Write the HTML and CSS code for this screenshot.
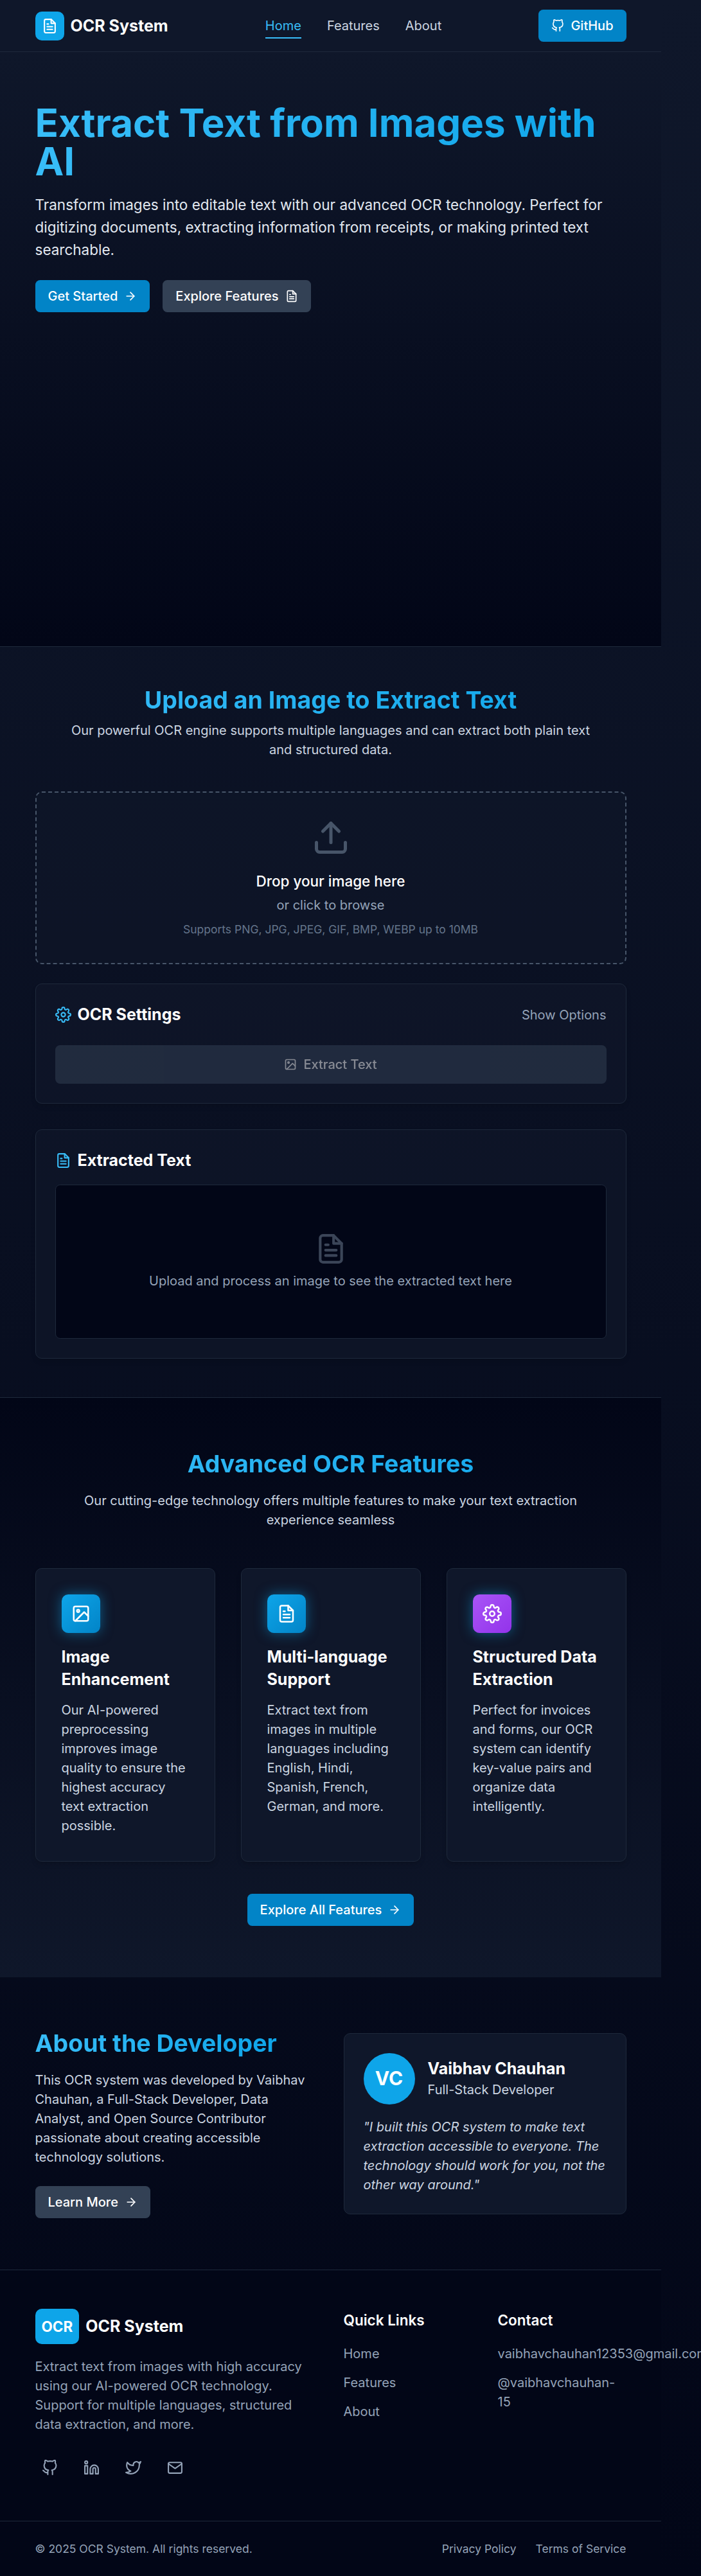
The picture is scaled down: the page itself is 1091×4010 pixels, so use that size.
FILE: index.html
```html
<!DOCTYPE html>
<html lang="en">
<head>
<meta charset="utf-8">
<title>OCR System</title>
<link rel="stylesheet" href="styles.css">
</head>
<body>
<svg class="sprite" aria-hidden="true">
  <symbol id="file" viewBox="0 0 24 24"><path d="M14 2H6a2 2 0 0 0-2 2v16a2 2 0 0 0 2 2h12a2 2 0 0 0 2-2V8z"/><polyline points="14 2 14 8 20 8"/><path d="M16 13H8M16 17H8M10 9H8"/></symbol>
  <symbol id="github" viewBox="0 0 24 24"><path d="M9 19c-5 1.5-5-2.5-7-3m14 6v-3.87a3.37 3.37 0 0 0-.94-2.61c3.14-.35 6.44-1.54 6.44-7A5.44 5.44 0 0 0 20 4.77 5.07 5.07 0 0 0 19.91 1S18.73.65 16 2.48a13.38 13.38 0 0 0-7 0C6.27.65 5.09 1 5.09 1A5.07 5.07 0 0 0 5 4.77a5.44 5.44 0 0 0-1.5 3.78c0 5.42 3.3 6.61 6.44 7A3.37 3.37 0 0 0 9 18.13V22"/></symbol>
  <symbol id="arrow" viewBox="0 0 24 24"><path d="M5 12h14"/><path d="m12 5 7 7-7 7"/></symbol>
  <symbol id="upload" viewBox="0 0 24 24"><path d="M21 15v4a2 2 0 0 1-2 2H5a2 2 0 0 1-2-2v-4"/><path d="m17 8-5-5-5 5"/><path d="M12 3v12"/></symbol>
  <symbol id="image" viewBox="0 0 24 24"><rect width="18" height="18" x="3" y="3" rx="2"/><circle cx="8.5" cy="8.5" r="1.5"/><polyline points="21 15 16 10 5 21"/></symbol>
  <symbol id="gear" viewBox="0 0 24 24"><circle cx="12" cy="12" r="3"/><path d="M19.4 15a1.65 1.65 0 0 0 .33 1.82l.06.06a2 2 0 0 1 0 2.83 2 2 0 0 1-2.83 0l-.06-.06a1.65 1.65 0 0 0-1.82-.33 1.65 1.65 0 0 0-1 1.51V21a2 2 0 0 1-2 2 2 2 0 0 1-2-2v-.09A1.65 1.65 0 0 0 9 19.4a1.65 1.65 0 0 0-1.82.33l-.06.06a2 2 0 0 1-2.83 0 2 2 0 0 1 0-2.83l.06-.06a1.65 1.65 0 0 0 .33-1.82 1.65 1.65 0 0 0-1.51-1H3a2 2 0 0 1-2-2 2 2 0 0 1 2-2h.09A1.65 1.65 0 0 0 4.6 9a1.65 1.65 0 0 0-.33-1.82l-.06-.06a2 2 0 0 1 0-2.83 2 2 0 0 1 2.83 0l.06.06a1.65 1.65 0 0 0 1.82.33H9a1.65 1.65 0 0 0 1-1.51V3a2 2 0 0 1 2-2 2 2 0 0 1 2 2v.09a1.65 1.65 0 0 0 1 1.51 1.65 1.65 0 0 0 1.82-.33l.06-.06a2 2 0 0 1 2.83 0 2 2 0 0 1 0 2.83l-.06.06a1.65 1.65 0 0 0-.33 1.82V9a1.65 1.65 0 0 0 1.51 1H21a2 2 0 0 1 2 2 2 2 0 0 1-2 2h-.09a1.65 1.65 0 0 0-1.51 1z"/></symbol>
  <symbol id="linkedin" viewBox="0 0 24 24"><path d="M16 8a6 6 0 0 1 6 6v7h-4v-7a2 2 0 0 0-4 0v7h-4v-7a6 6 0 0 1 6-6z"/><rect width="4" height="12" x="2" y="9"/><circle cx="4" cy="4" r="2"/></symbol>
  <symbol id="twitter" viewBox="0 0 24 24"><path d="M23 3a10.9 10.9 0 0 1-3.14 1.53 4.48 4.48 0 0 0-7.86 3v1A10.66 10.66 0 0 1 3 4s-4 9 5 13a11.64 11.64 0 0 1-7 2c9 5 20 0 20-11.5a4.5 4.5 0 0 0-.08-.83A7.72 7.72 0 0 0 23 3z"/></symbol>
  <symbol id="mail" viewBox="0 0 24 24"><rect width="20" height="16" x="2" y="4" rx="2"/><polyline points="22 6 12 13 2 6"/></symbol>
</svg>
<div class="page">
  <header class="site-header">
    <div class="container header-row">
      <a class="brand"><span class="brand-mark"><svg class="icon icon-md"><use href="#file"/></svg></span><span class="brand-name">OCR System</span></a>
      <nav class="nav"><a class="nav-link active">Home</a><a class="nav-link">Features</a><a class="nav-link">About</a></nav>
      <a class="btn btn-primary"><svg class="icon"><use href="#github"/></svg>GitHub</a>
    </div>
  </header>

  <section class="hero">
    <div class="container">
      <h1 class="hero-title gradient-text">Extract Text from Images with AI</h1>
      <p class="hero-text">Transform images into editable text with our advanced OCR technology. Perfect for digitizing documents, extracting information from receipts, or making printed text searchable.</p>
      <div class="hero-actions">
        <a class="btn btn-primary">Get Started<svg class="icon"><use href="#arrow"/></svg></a>
        <a class="btn btn-secondary">Explore Features<svg class="icon"><use href="#file"/></svg></a>
      </div>
    </div>
  </section>

  <section class="upload">
    <div class="container">
      <h2 class="title gradient-text">Upload an Image to Extract Text</h2>
      <p class="lead">Our powerful OCR engine supports multiple languages and can extract both plain text and structured data.</p>
      <div class="dropzone">
        <svg class="icon icon-xl"><use href="#upload"/></svg>
        <p class="drop-title">Drop your image here</p>
        <p class="drop-sub">or click to browse</p>
        <p class="drop-note">Supports PNG, JPG, JPEG, GIF, BMP, WEBP up to 10MB</p>
      </div>
      <div class="panel settings">
        <div class="panel-head">
          <h3 class="panel-title"><svg class="icon icon-md"><use href="#gear"/></svg>OCR Settings</h3>
          <span class="muted">Show Options</span>
        </div>
        <button class="extract" disabled><svg class="icon"><use href="#image"/></svg>Extract Text</button>
      </div>
      <div class="panel result">
        <h3 class="panel-title"><svg class="icon icon-md"><use href="#file"/></svg>Extracted Text</h3>
        <div class="result-box"><svg class="icon icon-lg"><use href="#file"/></svg><p>Upload and process an image to see the extracted text here</p></div>
      </div>
    </div>
  </section>

  <section class="features">
    <div class="container">
      <h2 class="title gradient-text">Advanced OCR Features</h2>
      <p class="lead">Our cutting-edge technology offers multiple features to make your text extraction experience seamless</p>
      <div class="feature-grid">
        <article class="feature"><span class="feature-icon"><svg class="icon icon-ft"><use href="#image"/></svg></span><h3 class="feature-title">Image Enhancement</h3><p>Our AI-powered preprocessing improves image quality to ensure the highest accuracy text extraction possible.</p></article>
        <article class="feature"><span class="feature-icon"><svg class="icon icon-ft"><use href="#file"/></svg></span><h3 class="feature-title">Multi-language Support</h3><p>Extract text from images in multiple languages including English, Hindi, Spanish, French, German, and more.</p></article>
        <article class="feature"><span class="feature-icon purple"><svg class="icon icon-ft"><use href="#gear"/></svg></span><h3 class="feature-title">Structured Data Extraction</h3><p>Perfect for invoices and forms, our OCR system can identify key-value pairs and organize data intelligently.</p></article>
      </div>
      <div class="features-more"><a class="btn btn-primary">Explore All Features<svg class="icon"><use href="#arrow"/></svg></a></div>
    </div>
  </section>

  <section class="about">
    <div class="container about-grid">
      <div>
        <h2 class="title gradient-text about-title">About the Developer</h2>
        <p class="about-text">This OCR system was developed by Vaibhav Chauhan, a Full-Stack Developer, Data Analyst, and Open Source Contributor passionate about creating accessible technology solutions.</p>
        <a class="btn btn-secondary">Learn More<svg class="icon"><use href="#arrow"/></svg></a>
      </div>
      <div class="profile">
        <div class="profile-head"><span class="avatar">VC</span><div><h3 class="profile-name">Vaibhav Chauhan</h3><p>Full-Stack Developer</p></div></div>
        <p class="quote">"I built this OCR system to make text extraction accessible to everyone. The technology should work for you, not the other way around."</p>
      </div>
    </div>
  </section>

  <footer class="footer">
    <div class="container footer-grid">
      <div class="footer-about">
        <a class="brand"><span class="brand-mark brand-ocr">OCR</span><span class="brand-name">OCR System</span></a>
        <p class="footer-text">Extract text from images with high accuracy using our AI-powered OCR technology. Support for multiple languages, structured data extraction, and more.</p>
        <div class="social">
          <a><svg class="icon icon-md"><use href="#github"/></svg></a>
          <a><svg class="icon icon-md"><use href="#linkedin"/></svg></a>
          <a><svg class="icon icon-md"><use href="#twitter"/></svg></a>
          <a><svg class="icon icon-md"><use href="#mail"/></svg></a>
        </div>
      </div>
      <div><h3 class="footer-title">Quick Links</h3><ul class="links"><li>Home</li><li>Features</li><li>About</li></ul></div>
      <div><h3 class="footer-title">Contact</h3><ul class="links"><li>vaibhavchauhan12353@gmail.com</li><li class="handle">@vaibhavchauhan-<wbr>15</li></ul></div>
    </div>
    <div class="footer-bottom">
      <div class="container footer-row"><p>© 2025 OCR System. All rights reserved.</p><div class="legal"><a>Privacy Policy</a><a>Terms of Service</a></div></div>
    </div>
  </footer>
</div>
</body>
</html>
```
FILE: styles.css
```css
:root {
  --slate-950: #020617;
  --slate-900: #0f172a;
  --slate-800: #1e293b;
  --slate-700: #334155;
  --slate-600: #475569;
  --slate-500: #64748b;
  --slate-400: #94a3b8;
  --slate-300: #cbd5e1;
  --slate-200: #e2e8f0;
  --sky-400: #38bdf8;
  --sky-500: #0ea5e9;
  --sky-600: #0284c7;
}

* { box-sizing: border-box; margin: 0; padding: 0; }

html {
  font-size: 20px;
  overflow-x: hidden;
  background: linear-gradient(to bottom, var(--slate-900), var(--slate-950));
}

body {
  font-family: Inter, "Liberation Sans", sans-serif;
  line-height: 1.5;
  color: #fff;
}

.sprite { position: absolute; width: 0; height: 0; }
.page { width: 1029px; }
.container { max-width: 48rem; margin: 0 auto; padding: 0 1rem; }

.icon {
  width: 1rem;
  height: 1rem;
  flex: none;
  fill: none;
  stroke: currentColor;
  stroke-width: 2;
  stroke-linecap: round;
  stroke-linejoin: round;
}
.icon-md { width: 1.25rem; height: 1.25rem; }
.icon-ft { width: 1.5rem; height: 1.5rem; }
.icon-lg { width: 2.5rem; height: 2.5rem; }
.icon-xl { width: 3rem; height: 3rem; }

.gradient-text {
  background: linear-gradient(to right, var(--sky-400), var(--sky-500));
  -webkit-background-clip: text;
  background-clip: text;
  color: transparent;
}

.btn {
  display: inline-flex;
  align-items: center;
  gap: .5rem;
  height: 2.5rem;
  padding: 0 1rem;
  border-radius: .375rem;
  font-weight: 500;
  white-space: nowrap;
}
.btn-primary { background: var(--sky-600); }
.btn-secondary { background: var(--slate-700); }

/* Header */
.site-header { background: var(--slate-900); border-bottom: 1px solid var(--slate-800); }
.header-row { height: 4rem; display: flex; align-items: center; justify-content: space-between; }
.brand { display: flex; align-items: center; gap: .5rem; }
.brand-mark { display: flex; padding: .5rem; border-radius: .5rem; background: var(--sky-500); }
.brand-name { font-size: 1.25rem; line-height: 1.75rem; font-weight: 700; }
.nav { display: flex; gap: 2rem; }
.nav-link { position: relative; color: var(--slate-300); }
.nav-link.active { color: var(--sky-400); }
.nav-link.active::after {
  content: "";
  position: absolute;
  left: 0;
  right: 0;
  bottom: -5px;
  height: 2px;
  background: var(--sky-400);
}

/* Hero */
.hero { padding: 4rem 0 26rem; background: linear-gradient(to bottom, var(--slate-900), var(--slate-950)); height: 925px; }
.hero-title { font-size: 3rem; line-height: 1; font-weight: 700; }
.hero-text { margin: 1rem 0 1.5rem; font-size: 1.125rem; line-height: 1.75rem; color: var(--slate-200); }
.hero-actions { display: flex; gap: 1rem; }

/* Upload */
.upload { padding: 3rem 0; border-top: 1px solid var(--slate-800); border-bottom: 1px solid var(--slate-800); text-align: center; }
.title { font-size: 1.875rem; line-height: 2.25rem; font-weight: 700; }
.lead { max-width: 42rem; margin: .5rem auto 2.5rem; color: var(--slate-300); }
.dropzone {
  padding: 2rem;
  border: 2px dashed var(--slate-600);
  border-radius: .5rem;
  background: rgba(15, 23, 42, .5);
}
.dropzone .icon { display: block; margin: 0 auto 1rem; color: var(--slate-600); }
.drop-title { font-size: 1.125rem; line-height: 1.75rem; font-weight: 500; }
.drop-sub { margin: .25rem 0 .5rem; color: var(--slate-400); }
.drop-note { font-size: .875rem; line-height: 1.25rem; color: var(--slate-500); }

.panel {
  padding: 1.5rem;
  border: 1px solid var(--slate-800);
  border-radius: .5rem;
  background: rgba(15, 23, 42, .7);
  box-shadow: 0 5px 8px -1px rgba(0, 0, 0, .1);
}
.settings { margin: 1.5rem 0 2rem; }
.panel-head { display: flex; align-items: center; justify-content: space-between; }
.panel-title { display: flex; align-items: center; gap: .5rem; font-size: 1.25rem; line-height: 1.75rem; font-weight: 700; }
.panel-title .icon { color: var(--sky-400); }
.muted { color: var(--slate-400); }
.extract {
  display: flex;
  align-items: center;
  justify-content: center;
  gap: .5rem;
  width: 100%;
  height: 3rem;
  margin-top: 1.5rem;
  border: 0;
  border-radius: .375rem;
  background: var(--slate-700);
  color: #fff;
  font: 500 1rem/1.5 Inter, sans-serif;
  opacity: .5;
}
.result-box {
  display: flex;
  flex-direction: column;
  align-items: center;
  justify-content: center;
  gap: .5rem;
  height: 12rem;
  margin-top: 1rem;
  border: 1px solid var(--slate-800);
  border-radius: .375rem;
  background: var(--slate-950);
  color: var(--slate-400);
}
.result-box .icon { color: #3b4558; }

/* Features */
.features { padding: 4rem 0; background: linear-gradient(to bottom, var(--slate-950), var(--slate-900)); text-align: center; }
.features .lead { margin: 1rem auto 3rem; }
.feature-grid { display: grid; grid-template-columns: repeat(3, 1fr); gap: 2rem; text-align: left; }
.feature {
  padding: 2rem;
  border: 1px solid var(--slate-800);
  border-radius: .5rem;
  background: var(--slate-900);
  box-shadow: 0 5px 8px -1px rgba(0, 0, 0, .15);
  color: var(--slate-300);
}
.feature-icon {
  display: flex;
  align-items: center;
  justify-content: center;
  width: 3rem;
  height: 3rem;
  border-radius: .5rem;
  background: linear-gradient(to bottom right, var(--sky-500), var(--sky-600));
  box-shadow: 0 0 19px rgba(14, 165, 233, .5);
  color: #fff;
}
.purple { background: linear-gradient(to bottom right, #a855f7, #9333ea); }
.feature-title { margin: 1rem 0 .75rem; font-size: 1.25rem; line-height: 1.75rem; font-weight: 700; color: #fff; }
.features-more { margin-top: 2.5rem; display: flex; justify-content: center; }

/* About */
.about { padding: 4rem 0; }
.about-grid { display: grid; grid-template-columns: 1fr 1fr; gap: 2rem; align-items: center; }
.about-title { width: fit-content; }
.about-text { margin: 1rem 0 1.5rem; color: var(--slate-300); }
.profile { padding: 1.5rem; border: 1px solid var(--slate-800); border-radius: .5rem; background: var(--slate-900); color: var(--slate-300); }
.profile-head { display: flex; align-items: center; gap: 1rem; margin-bottom: 1rem; }
.avatar {
  display: flex;
  align-items: center;
  justify-content: center;
  width: 4rem;
  height: 4rem;
  border-radius: 50%;
  background: var(--sky-500);
  color: #fff;
  font-size: 1.5rem;
  font-weight: 700;
}
.profile-name { font-size: 1.25rem; line-height: 1.75rem; font-weight: 700; color: #fff; }
.quote { font-style: italic; }

/* Footer */
.footer { border-top: 1px solid var(--slate-800); background: var(--slate-950); color: var(--slate-400); }
.footer-grid { display: grid; grid-template-columns: repeat(4, minmax(0, 1fr)); gap: 2rem; padding-top: 3rem; padding-bottom: 3rem; }
.footer-about { grid-column: span 2; }
.footer .brand { color: #fff; }
.brand-ocr { font-size: 1.125rem; line-height: 1.75rem; font-weight: 700; }
.footer-text { margin: 1rem 0 1.5rem; }
.social { display: flex; gap: 1rem; }
.social a { display: flex; padding: .5rem; }
.footer-title { margin-bottom: 1rem; font-size: 1.125rem; line-height: 1.75rem; font-weight: 600; color: #fff; }
.links { display: grid; grid-template-columns: minmax(0, 1fr); gap: .75rem; list-style: none; }
.handle { padding-right: .5rem; }
.footer-bottom { padding: 1.5rem 0; border-top: 1px solid var(--slate-800); font-size: .875rem; line-height: 1.25rem; }
.footer-row { display: flex; justify-content: space-between; }
.legal { display: flex; gap: 1.5rem; }
```
